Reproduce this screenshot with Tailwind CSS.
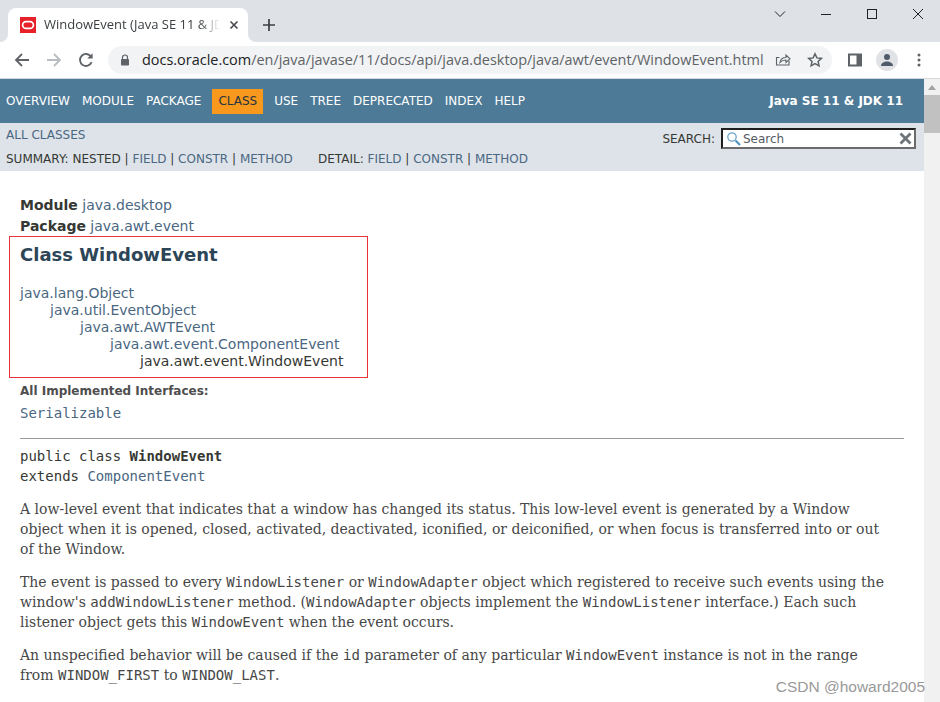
<!DOCTYPE html>
<html>
<head>
    <title>WindowEvent</title>
    <script src="https://cdn.jsdelivr.net/npm/@tailwindcss/browser@4"></script>
</head>
<body class="bg-white">
<div class="flex flex-col h-[702px] w-[940px] overflow-hidden relative">
    <!-- Tab strip -->
    <div class="h-[42px] bg-[#dee1e6] flex items-end relative shrink-0">
        <div class="ml-[8px] w-[240px] h-[34px] bg-white rounded-t-[8px] flex items-center pl-[12px] pr-[9px] relative">
            <div class="absolute left-[-8px] bottom-0 w-[8px] h-[8px] bg-white"><div class="w-full h-full bg-[#dee1e6] rounded-br-[8px]"></div></div>
            <div class="absolute right-[-8px] bottom-0 w-[8px] h-[8px] bg-white"><div class="w-full h-full bg-[#dee1e6] rounded-bl-[8px]"></div></div>
            <svg class="w-[16px] h-[16px] shrink-0" viewBox="0 0 16 16"><rect width="16" height="16" fill="#e8202a"/><rect x="2.6" y="4.6" width="10.8" height="6.8" rx="3.4" fill="none" stroke="#fff" stroke-width="1.7"/></svg>
            <div class="ml-[8px] w-[176px] overflow-hidden whitespace-nowrap text-[13px] text-[#3c4043] font-['Open_Sans',sans-serif]" style="mask-image:linear-gradient(to right,#000 88%,transparent)">WindowEvent (Java SE 11 &amp; JDK 11)</div>
            <svg class="w-[10px] h-[10px] ml-auto shrink-0" viewBox="0 0 10 10"><path d="M1.5 1.5l7 7M8.5 1.5l-7 7" stroke="#45484c" stroke-width="1.6" fill="none"/></svg>
        </div>
        <svg class="w-[14px] h-[14px] ml-[14px] mb-[10px]" viewBox="0 0 14 14"><path d="M7 1v12M1 7h12" stroke="#3c4043" stroke-width="1.7" fill="none"/></svg>
        <div class="absolute top-0 right-0 flex items-center h-[28px]">
            <svg class="w-[46px] h-[28px]" viewBox="0 0 46 28"><path d="M19 11.500l5 5 5-5" stroke="#222" stroke-width="1" fill="none"/></svg>
            <svg class="w-[46px] h-[28px]" viewBox="0 0 46 28"><path d="M19 14.500h10" stroke="#222" stroke-width="1" fill="none"/></svg>
            <svg class="w-[46px] h-[28px]" viewBox="0 0 46 28"><rect x="19.500" y="9.500" width="9" height="9" stroke="#222" stroke-width="1" fill="none"/></svg>
            <svg class="w-[46px] h-[28px]" viewBox="0 0 46 28"><path d="M19 9l10 10M29 9l-10 10" stroke="#222" stroke-width="1" fill="none"/></svg>
        </div>
    </div>
    <!-- Toolbar -->
    <div class="h-[37px] bg-white flex items-center shrink-0 border-b border-[#d5d8dc]">
        <svg class="w-[16px] h-[16px] ml-[14px] shrink-0" viewBox="0 0 16 16"><path d="M15 8H2M8 2L2 8l6 6" stroke="#5f6368" stroke-width="1.8" fill="none"/></svg>
        <svg class="w-[16px] h-[16px] ml-[16px] shrink-0" viewBox="0 0 16 16"><path d="M1 8h13M8 2l6 6-6 6" stroke="#b9bcc0" stroke-width="1.8" fill="none"/></svg>
        <svg class="w-[16px] h-[16px] ml-[16px] shrink-0" viewBox="0 0 16 16"><path d="M13.6 10.2A6 6 0 1 1 13 4.6" stroke="#5f6368" stroke-width="1.8" fill="none"/><path d="M14.6 1.2v5.4H9.2z" fill="#5f6368"/></svg>
        <div class="ml-[14px] w-[724px] h-[28px] bg-[#f1f3f4] rounded-full flex items-center pl-[11px] shrink-0">
            <svg class="w-[12px] h-[12px] shrink-0" viewBox="0 0 12 12"><path d="M3.5 5V3.5a2.5 2.5 0 0 1 5 0V5" stroke="#5f6368" stroke-width="1.2" fill="none"/><rect x="2" y="5" width="8" height="6.5" rx="0.8" fill="#5f6368"/></svg>
            <div class="ml-[11px] text-[14.45px] whitespace-nowrap text-[#5f6368] font-['Open_Sans',sans-serif]"><span class="text-[#202124]">docs.oracle.com</span>/en/java/javase/11/docs/api/java.desktop/java/awt/event/WindowEvent.html</div>
            <svg class="w-[16px] h-[16px] ml-auto shrink-0" viewBox="0 0 16 16"><path d="M14 8.500v4.500H1.500V5.500h3" stroke="#5f6368" stroke-width="1.100" fill="none"/><path d="M5 10.500c.5-3 2.500-5 6-5V3l4 3.800-4 3.700V8c-2.500 0-4.500.8-6 2.500z" stroke="#5f6368" stroke-width="1.100" fill="none"/></svg>
            <svg class="w-[16px] h-[16px] ml-[16px] mr-[9px] shrink-0" viewBox="0 0 16 16"><path d="M8 1.800l1.900 4.100 4.500.5-3.300 3 .9 4.400L8 11.600l-3.900 2.200.9-4.400-3.300-3 4.500-.5z" stroke="#5f6368" stroke-width="1.500" fill="none"/></svg>
        </div>
        <svg class="w-[14px] h-[14px] ml-[16px] shrink-0" viewBox="0 0 14 14"><rect x="0" y="0.500" width="14" height="13" fill="#5f6368"/><rect x="2" y="2.500" width="6.500" height="9" fill="#fff"/></svg>
        <div class="w-[22px] h-[22px] ml-[14px] rounded-full bg-[#e0e2e6] flex items-center justify-center shrink-0">
            <svg class="w-[14px] h-[14px]" viewBox="0 0 14 14"><circle cx="7" cy="4" r="3" fill="#4f5b6b"/><path d="M1 13c0-3 3-4.500 6-4.500s6 1.500 6 4.500z" fill="#4f5b6b"/></svg>
        </div>
        <svg class="w-[4px] h-[14px] ml-[19px] shrink-0" viewBox="0 0 4 14"><circle cx="2" cy="2" r="1.500" fill="#5f6368"/><circle cx="2" cy="7" r="1.500" fill="#5f6368"/><circle cx="2" cy="12" r="1.500" fill="#5f6368"/></svg>
    </div>
    <!-- Page -->
    <div class="flex flex-1 min-h-0">
        <div class="w-[924px] overflow-hidden font-['DejaVu_Sans',sans-serif] text-[#474747] text-[14px]">
            <div class="h-[44px] bg-[#4d7a97] flex items-center text-white text-[12px] pr-[21px]">
                <ul class="flex items-center">
                    <li class="px-[6px]">OVERVIEW</li>
                    <li class="px-[6px]">MODULE</li>
                    <li class="px-[6px]">PACKAGE</li>
                    <li class="ml-[5px] mr-[5px] px-[6px] h-[25px] leading-[25px] bg-[#f8981d] text-[#253441]">CLASS</li>
                    <li class="px-[6px]">USE</li>
                    <li class="px-[6px]">TREE</li>
                    <li class="px-[6px]">DEPRECATED</li>
                    <li class="px-[6px]">INDEX</li>
                    <li class="px-[6px]">HELP</li>
                </ul>
                <div class="ml-auto font-bold text-[12px]">Java SE 11 &amp; JDK 11</div>
            </div>
            <div class="h-[48px] bg-[#dee3e9] text-[12px] text-[#353833] relative pl-[6px]">
                <div class="pt-[3px] h-[27px] text-[#4a6782]">ALL CLASSES</div>
                <div class="flex">
                    <div class="w-[312px]">SUMMARY: NESTED | <span class="text-[#4a6782]">FIELD</span> | <span class="text-[#4a6782]">CONSTR</span> | <span class="text-[#4a6782]">METHOD</span></div>
                    <div>DETAIL: <span class="text-[#4a6782]">FIELD</span> | <span class="text-[#4a6782]">CONSTR</span> | <span class="text-[#4a6782]">METHOD</span></div>
                </div>
                <div class="absolute right-[8px] top-[5px] flex items-center">
                    <span class="mr-[6px]">SEARCH:</span>
                    <div class="w-[195px] h-[21px] border-2 border-[#1f1f1f] border-r-[#6b6b6b] border-b-[#6b6b6b] bg-white flex items-center pl-[3px] pr-[2px]">
                        <svg class="w-[15px] h-[15px] shrink-0" viewBox="0 0 15 15"><circle cx="6" cy="6" r="4.200" stroke="#6aa6cf" stroke-width="1.300" fill="none"/><path d="M9.500 9.500l4.500 4.500" stroke="#4a8fbd" stroke-width="2" fill="none"/></svg>
                        <span class="ml-[2px] text-[#555b63]">Search</span>
                        <svg class="w-[13px] h-[13px] ml-auto shrink-0" viewBox="0 0 13 13"><path d="M1.500 1.500l10 10M11.500 1.500l-10 10" stroke="#6f7478" stroke-width="2.800" fill="none"/></svg>
                    </div>
                </div>
            </div>
            <!-- Content -->
            <div class="pl-[20px] pr-[20px] relative">
                <div class="absolute left-[9px] top-[65px] w-[359px] h-[142px] border border-[#e8333a]"></div>
                <div class="pt-[24px] leading-[21px]"><b class="font-bold text-[#353833]">Module</b> <span class="text-[#4a6782]">java.desktop</span></div>
                <div class="leading-[21px]"><b class="font-bold text-[#353833]">Package</b> <span class="text-[#4a6782]">java.awt.event</span></div>
                <h2 class="pt-[5px] h-[48px] text-[18px] leading-[26px] font-bold text-[#2c4557]">Class WindowEvent</h2>
                <div class="text-[#4a6782] leading-[17px]">
                    <div>java.lang.Object</div>
                    <div class="pl-[30px]">java.util.EventObject</div>
                    <div class="pl-[60px]">java.awt.AWTEvent</div>
                    <div class="pl-[90px]">java.awt.event.ComponentEvent</div>
                    <div class="pl-[120px] text-[#353833]">java.awt.event.WindowEvent</div>
                </div>
                <div class="mt-[12px] text-[12px] font-bold leading-[18px] text-[#4e4e4e]">All Implemented Interfaces:</div>
                <div class="mt-[3px] font-['DejaVu_Sans_Mono',monospace] text-[#4a6782] leading-[20px]">Serializable</div>
                <hr class="mt-[15px] border-t border-[#999]">
                <div class="mt-[7px] font-['DejaVu_Sans_Mono',monospace] leading-[20px] text-[#353833]">public class <b class="font-bold">WindowEvent</b></div>
                <div class="font-['DejaVu_Sans_Mono',monospace] leading-[20px] text-[#353833]">extends <span class="text-[#4a6782]">ComponentEvent</span></div>
                <div class="font-['DejaVu_Serif',serif] text-[#474747] leading-[19.8px] pr-[14px]">
                    <p class="mt-[14px]">A low-level event that indicates that a window has changed its status. This low-level event is generated by a Window object when it is opened, closed, activated, deactivated, iconified, or deiconified, or when focus is transferred into or out of the Window.</p>
                    <p class="mt-[14px]">The event is passed to every <code class="font-['DejaVu_Sans_Mono',monospace]">WindowListener</code> or <code class="font-['DejaVu_Sans_Mono',monospace]">WindowAdapter</code> object which registered to receive such events using the window's <code class="font-['DejaVu_Sans_Mono',monospace]">addWindowListener</code> method. (<code class="font-['DejaVu_Sans_Mono',monospace]">WindowAdapter</code> objects implement the <code class="font-['DejaVu_Sans_Mono',monospace]">WindowListener</code> interface.) Each such listener object gets this <code class="font-['DejaVu_Sans_Mono',monospace]">WindowEvent</code> when the event occurs.</p>
                    <p class="mt-[13px]">An unspecified behavior will be caused if the <code class="font-['DejaVu_Sans_Mono',monospace]">id</code> parameter of any particular <code class="font-['DejaVu_Sans_Mono',monospace]">WindowEvent</code> instance is not in the range from <code class="font-['DejaVu_Sans_Mono',monospace]">WINDOW_FIRST</code> to <code class="font-['DejaVu_Sans_Mono',monospace]">WINDOW_LAST</code>.</p>
                    <p class="mt-[16px] font-['DejaVu_Sans',sans-serif] text-[12px] font-bold">Since:</p>
                </div>
            </div>
        </div>
        <!-- Scrollbar -->
        <div class="w-[16px] bg-[#f1f1f1] flex flex-col items-center shrink-0">
            <svg class="w-[8px] h-[5px] mt-[6px]" viewBox="0 0 8 5"><path d="M4 0l4 5H0z" fill="#a3a3a3"/></svg>
            <div class="w-full h-[38px] mt-[5px] bg-[#c1c1c1]"></div>
        </div>
    </div>
    <div class="absolute right-[15px] top-[675px] text-[15.5px] text-[#999] font-['Liberation_Sans',sans-serif]">CSDN @howard2005</div>
</div>
</body>
</html>
